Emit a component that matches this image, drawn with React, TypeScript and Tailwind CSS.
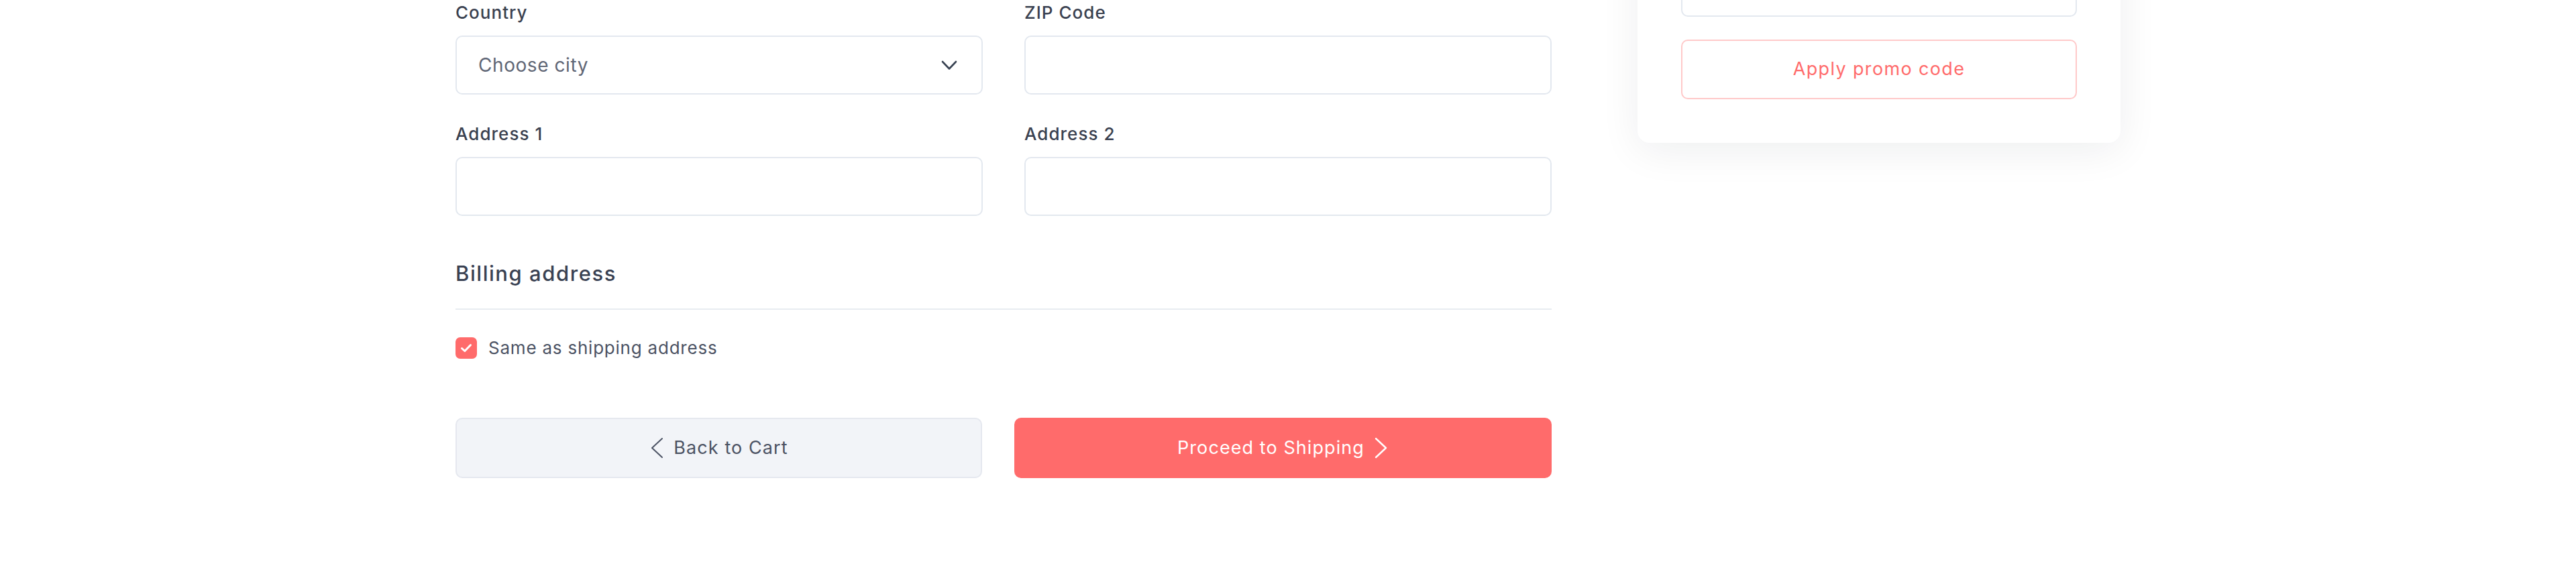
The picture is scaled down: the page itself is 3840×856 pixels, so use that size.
import React from "react";

function ChevronDown() {
  return (
    <svg width="24" height="15" viewBox="0 0 24 15" fill="none" className="shrink-0">
      <path d="M2 2 L12 12.5 L22 2" stroke="#374151" strokeWidth="2.6" strokeLinecap="round" strokeLinejoin="round" />
    </svg>
  );
}

function ChevronLeft({ color }: { color: string }) {
  return (
    <svg width="22" height="32" viewBox="0 0 22 32" fill="none" className="shrink-0">
      <path d="M19 2 L4 16 L19 30" stroke={color} strokeWidth="2" strokeLinecap="round" strokeLinejoin="round" />
    </svg>
  );
}

function ChevronRight({ color }: { color: string }) {
  return (
    <svg width="22" height="32" viewBox="0 0 22 32" fill="none" className="shrink-0">
      <path d="M3 2 L18 16 L3 30" stroke={color} strokeWidth="2.4" strokeLinecap="round" strokeLinejoin="round" />
    </svg>
  );
}

function Field({ label, children }: { label: string; children: React.ReactNode }) {
  return (
    <div className="flex flex-col">
      <label className="text-[26px] leading-[36px] font-medium tracking-[0.04em] text-[#3a4150]">{label}</label>
      <div className="mt-[16px]">{children}</div>
    </div>
  );
}

function TextInput() {
  return <div className="h-[88px] w-full rounded-[10px] border-2 border-[#e3e8ef] bg-white" />;
}

export default function App() {
  return (
    <div className="w-full h-[856px] bg-white overflow-hidden font-['Inter','Liberation_Sans',sans-serif]">
      <div className="flex justify-center items-start gap-[128px] pt-[1px]">
        <div className="w-[1634px] flex flex-col">
          <div className="grid grid-cols-2 gap-x-[62px] gap-y-[41px]">
            <Field label="Country">
              <div className="h-[88px] w-full rounded-[10px] border-2 border-[#e3e8ef] bg-white flex items-center justify-between pl-[32px] pr-[36px]">
                <span className="text-[28px] tracking-[0.02em] text-[#5f6675]">Choose city</span>
                <ChevronDown />
              </div>
            </Field>
            <Field label="ZIP Code">
              <TextInput />
            </Field>
            <Field label="Address 1">
              <TextInput />
            </Field>
            <Field label="Address 2">
              <TextInput />
            </Field>
          </div>

          <h3 className="mt-[66px] text-[31px] leading-[40px] font-medium tracking-[0.05em] text-[#394152]">Billing address</h3>
          <div className="mt-[32px] h-[2px] bg-[#e8ecf1]" />

          <div className="mt-[39px] flex items-center gap-[17px]">
            <div className="w-[32px] h-[32px] rounded-[7px] bg-[#ff6b6b] flex items-center justify-center">
              <svg width="18" height="14" viewBox="0 0 18 14" fill="none">
                <path d="M2.5 7.5 L6.8 11.5 L15.5 2.5" stroke="white" strokeWidth="3" strokeLinecap="round" strokeLinejoin="round" />
              </svg>
            </div>
            <span className="text-[26px] leading-[36px] tracking-[0.03em] text-[#4b5263]">Same as shipping address</span>
          </div>

          <div className="mt-[86px] flex gap-[48px]">
            <button className="w-[785px] h-[90px] rounded-[10px] border-2 border-[#e5e8ef] bg-[#f2f4f8] flex items-center justify-center gap-[14px] text-[27px] tracking-[0.04em] text-[#4b5263]">
              <ChevronLeft color="#4b5263" />
              <span>Back to Cart</span>
            </button>
            <button className="flex-1 h-[90px] rounded-[10px] bg-[#ff6b6b] flex items-center justify-center gap-[14px] text-[27px] tracking-[0.04em] text-white">
              <span>Proceed to Shipping</span>
              <ChevronRight color="#ffffff" />
            </button>
          </div>
        </div>

        <aside className="w-[720px] -mt-[129px] rounded-[18px] bg-white shadow-[0_12px_60px_rgba(15,23,42,0.07)] px-[65px] pt-[65px] pb-[65px] flex flex-col">
          <div className="h-[88px] w-full rounded-[10px] border-2 border-[#e3e8ef] bg-white" />
          <button className="mt-[34px] h-[89px] w-full rounded-[10px] border-2 border-[#ffc9c9] bg-white text-[27px] tracking-[0.05em] text-[#ff6b6b]">
            Apply promo code
          </button>
        </aside>
      </div>
    </div>
  );
}
